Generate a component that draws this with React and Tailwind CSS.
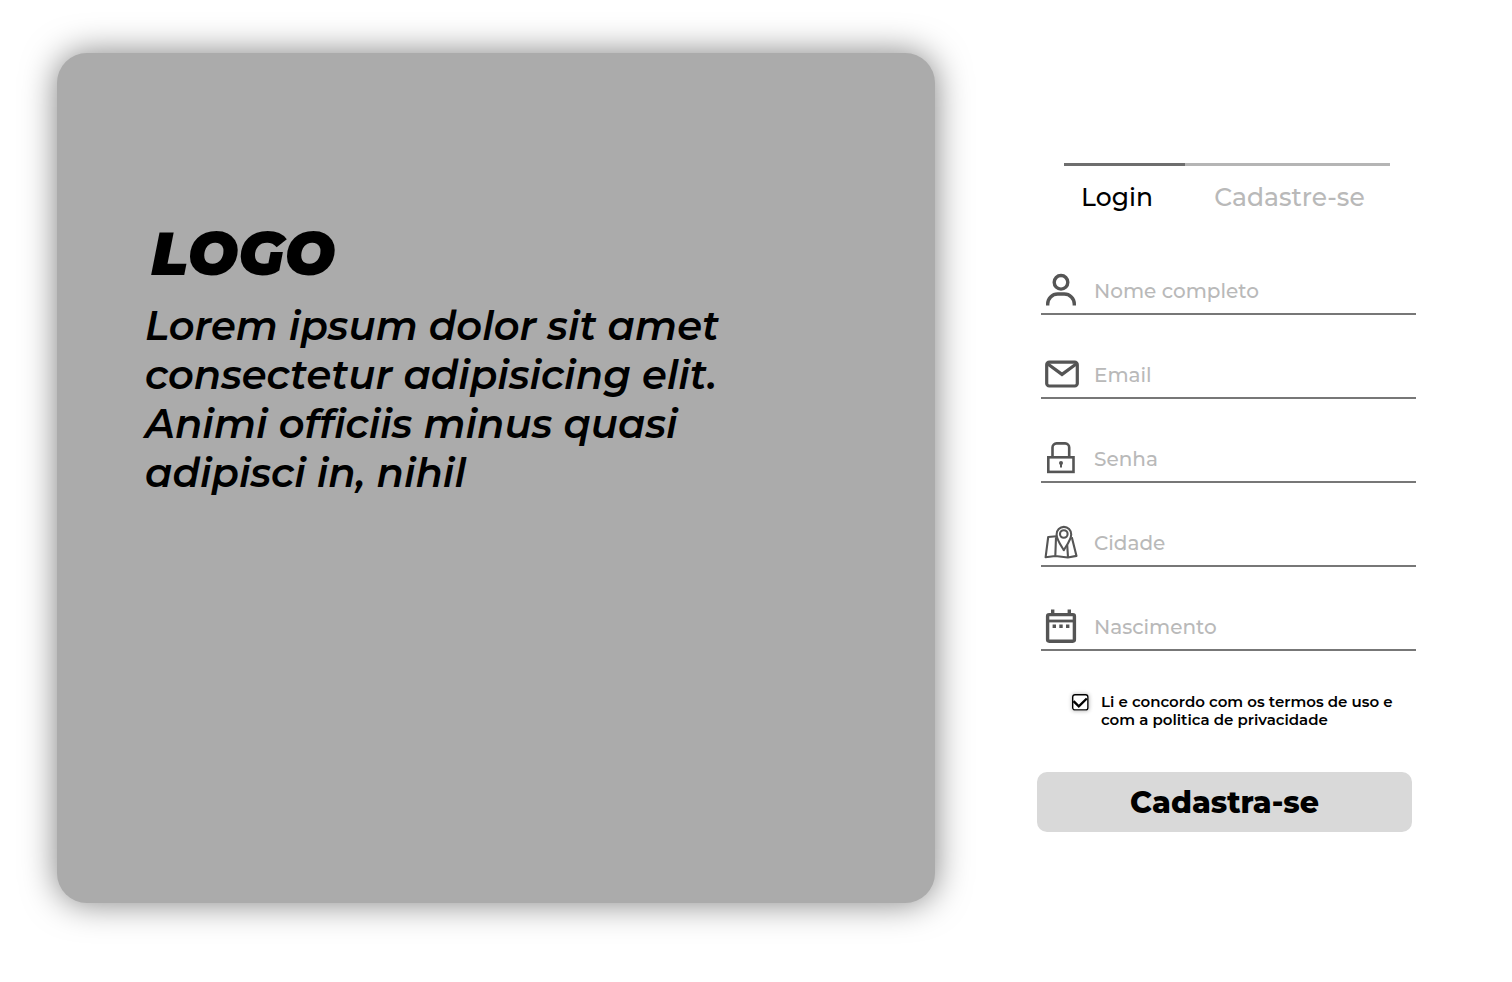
function UserIcon(props) {
  return (
    <svg {...props} viewBox="0 0 36 36" className="size-9 shrink-0" fill="none" stroke="#555" strokeWidth="3.4">
      <circle cx="18" cy="9.3" r="6.8" />
      <path d="M4.7 32.5V31a10 10 0 0 1 10-10h6.6a10 10 0 0 1 10 10v1.5" />
    </svg>
  );
}

function MailIcon(props) {
  return (
    <svg {...props} viewBox="0 0 36 36" className="size-9 shrink-0" fill="none" stroke="#555" strokeWidth="3.2">
      <rect x="3.7" y="5.2" width="30.6" height="23.8" rx="2.6" />
      <path d="M4.5 6.8 19 17.4 33.5 6.8" />
    </svg>
  );
}

function LockIcon(props) {
  return (
    <svg {...props} viewBox="0 0 36 36" className="size-9 shrink-0" fill="none" stroke="#555" strokeWidth="2.6">
      <rect x="5.3" y="16.3" width="25.2" height="14.6" />
      <path d="M9.5 16V6.4a4 4 0 0 1 4-4h8.700a4 4 0 0 1 4 4V16" />
      <circle cx="18" cy="22" r="2" fill="#555" stroke="none" />
      <path d="M18 22v4.400" strokeWidth="2" />
    </svg>
  );
}

function MapIcon(props) {
  return (
    <svg {...props} viewBox="0 0 36 36" className="size-9 shrink-0" fill="none" stroke="#555" strokeWidth="2.1" strokeLinejoin="round">
      <path d="M20.8 25.2c-2-3.6-7.2-10.6-7.2-15.8a7.3 7.5 0 0 1 14.6 0c0 5.2-5.4 12.2-7.4 15.8z" />
      <circle cx="20.8" cy="9" r="3.8" />
      <path d="M13.5 11.2 5.2 12 2.6 32.3 12.3 31l12.5 1.5 8.7-1.6-4.7-18.7M13 12.5 12.3 31M24.2 20l.8 12.3" />
    </svg>
  );
}

function CalendarIcon(props) {
  return (
    <svg {...props} viewBox="0 0 36 36" className="size-9 shrink-0" fill="none" stroke="#555" strokeWidth="3.4">
      <rect x="4.6" y="5.6" width="26.8" height="26.6" rx="1.6" />
      <path d="M4.6 12h26.8" strokeWidth="2.8" />
      <path d="M9.7 .5v5M26.3 .5v5" />
      <path d="M9.6 17.2h3.4M16.3 17.2h3.4M23 17.2h3.4" />
    </svg>
  );
}

const fields = [
  { id: "nome", type: "text", label: "Nome completo", Icon: UserIcon },
  { id: "email", type: "email", label: "Email", Icon: MailIcon },
  { id: "senha", type: "password", label: "Senha", Icon: LockIcon },
  { id: "cidade", type: "text", label: "Cidade", Icon: MapIcon },
  { id: "nascimento", type: "text", label: "Nascimento", Icon: CalendarIcon },
];

export default function App() {
  return (
    <main className="flex min-h-screen items-start gap-[102px] bg-white pt-[53px] pr-24 pb-20 pl-[57px] font-[Montserrat,Inter,sans-serif] text-black">
      <section className="min-h-[850px] flex-1 rounded-[30px] bg-[#ababab] px-[88px] pt-[165px] shadow-[0_0_34px_rgba(0,0,0,0.5)]">
        <h1 className="pl-1.5 text-[60px] leading-[72px] font-black italic">LOGO</h1>
        <p className="mt-[11px] text-[40px] leading-[49px] font-semibold italic">
          Lorem ipsum dolor sit amet
          <br />
          consectetur adipisicing elit.
          <br />
          Animi officiis minus quasi
          <br />
          adipisci in, nihil
        </p>
      </section>

      <form className="w-[379px] shrink-0 pt-[110px]" onSubmit={(e) => e.preventDefault()}>
        <nav className="mr-[26px] ml-[27px] flex text-[25px] leading-8 font-medium">
          <a href="#login" className="w-[121px] border-t-3 border-[#6e6e6e] pt-[15px] pr-[15px] text-center">
            Login
          </a>
          <a href="#cadastro" className="flex-1 border-t-3 border-[#b5b5b5] pt-[15px] pl-1 text-center text-[#b9b9b9]">
            Cadastre-se
          </a>
        </nav>

        <div className="mt-[18px] pl-1">
          {fields.map(({ id, type, label, Icon }) => (
            <div key={id} className="flex h-[84px] items-end border-b-2 border-[#777] pb-1 pl-0.5">
              <label htmlFor={id} className="block shrink-0">
                <Icon role="img" aria-label={label} />
              </label>
              <input
                id={id}
                type={type}
                placeholder={label}
                className="ml-[15px] h-9 min-w-0 flex-1 bg-transparent text-[20px] font-medium outline-none placeholder:text-[#b9b9b9]"
              />
            </div>
          ))}
        </div>

        <div className="mt-[42px] flex gap-3 pl-[35px]">
          <span className="relative mt-px size-[17px] shrink-0">
            <input
              id="termos"
              type="checkbox"
              defaultChecked
              className="peer block size-[17px] appearance-none rounded-[3px] bg-white shadow-[0_0_4px_rgba(0,0,0,0.3)]"
            />
            <svg
              aria-hidden="true"
              viewBox="0 0 17 17"
              className="pointer-events-none absolute inset-0 size-[17px] [&_path]:hidden peer-checked:[&_path]:block"
              fill="none"
              stroke="#000"
              strokeWidth="2.4"
            >
              <rect x=".7" y=".7" width="15.2" height="15.2" rx="2.2" strokeWidth="1.4" />
              <path d="M1.5 7.2 6.8 12.4 14.8 4.5" />
            </svg>
          </span>
          <label htmlFor="termos" className="text-[15px] leading-[18px] font-semibold whitespace-nowrap">
            Li e concordo com os termos de uso e
            <br />
            com a politica de privacidade
          </label>
        </div>

        <button type="submit" className="mt-[43px] block h-[60px] w-[375px] rounded-[10px] bg-[#d9d9d9] text-[30px] font-extrabold">
          Cadastra-se
        </button>
      </form>
    </main>
  );
}
